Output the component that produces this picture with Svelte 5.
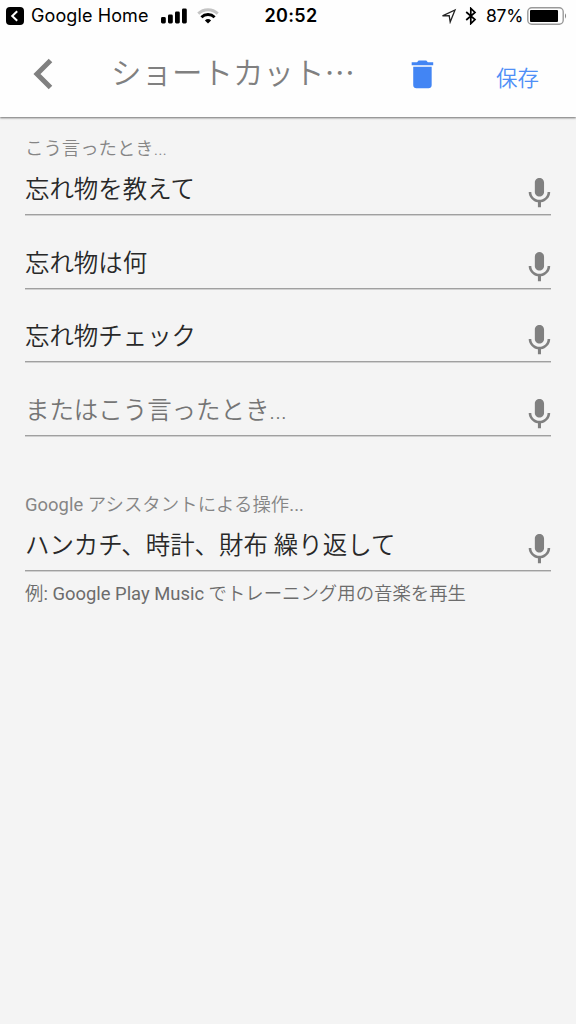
<script>
	let back = "Google Home";
	let time = "20:52";
	let battery = 87;

	let phrases = ["忘れ物を教えて", "忘れ物は何", "忘れ物チェック", ""];
	let action = "ハンカチ、時計、財布 繰り返して";
</script>

{#snippet mic()}
	<svg class="mic" viewBox="0 0 24 24">
		<path
			d="M12 14c1.66 0 2.99-1.34 2.99-3L15 5c0-1.66-1.34-3-3-3S9 3.34 9 5v6c0 1.66 1.34 3 3 3zm5.3-3c0 3-2.54 5.1-5.3 5.1S6.7 14 6.7 11H5c0 3.41 2.72 6.23 6 6.72V21h2v-3.28c3.28-.48 6-3.3 6-6.72h-1.7z"
		/>
	</svg>
{/snippet}

<main>
	<header>
		<div class="status">
			<div class="left">
				<svg class="app" viewBox="0 0 18 18">
					<rect width="18" height="18" rx="4" />
					<path d="M11.2 4.2 6.2 9l5 4.8" fill="none" stroke="#fff" stroke-width="2" />
				</svg>
				<span class="back">{back}</span>
				<svg class="signal" viewBox="0 0 26 16">
					<rect x="0" y="9" width="4.8" height="6.5" rx="1.4" />
					<rect x="7" y="6.5" width="4.8" height="9" rx="1.4" />
					<rect x="14" y="3.5" width="4.8" height="12" rx="1.4" />
					<rect x="21" y="0.5" width="4.8" height="15" rx="1.4" />
				</svg>
				<svg class="wifi" viewBox="0 0 22 16" fill="none" stroke-width="2.9">
					<path d="M1.3 5.6a14 14 0 0 1 19.4 0" stroke="#c4c4c4" />
					<path d="M4.4 9.2a9.5 9.5 0 0 1 13.2 0" stroke="#000" />
					<path d="M7.9 12.5a4.6 4.6 0 0 1 6.2 0L11 15.6z" fill="#000" />
				</svg>
			</div>
			<span class="time">{time}</span>
			<div class="right">
				<svg class="location" viewBox="0 0 16 16">
					<path d="M1.5 7.8 14 2 9.2 14 8.2 7.6z" fill="none" stroke="#222" stroke-width="1.3" />
				</svg>
				<svg class="bluetooth" viewBox="0 0 12 18">
					<path d="M1.2 5 10 12.5 5.8 16.6V1.4L10 5.5 1.2 13" fill="none" stroke="#000" stroke-width="1.7" />
				</svg>
				<span class="percent">{battery}%</span>
				<svg class="battery" viewBox="0 0 41 18">
					<rect x="0.8" y="0.8" width="35.4" height="16.4" rx="4" fill="none" stroke="#999" stroke-width="1.4" />
					<rect x="3" y="3" width={(32.2 * battery) / 100} height="12" rx="1" />
					<path d="M38 6.3q2.2 2.7 0 5.4z" fill="#888" />
				</svg>
			</div>
		</div>

		<nav>
			<svg class="chevron" viewBox="0 0 20 32">
				<path d="M17.5 2.5 4 16l13.5 13.5" fill="none" stroke="#808080" stroke-width="5" />
			</svg>
			<h1>ショートカット⋯</h1>
			<svg class="trash" viewBox="0 0 24 24">
				<path d="M6 19c0 1.1.9 2 2 2h8c1.1 0 2-.9 2-2V7H6v12zM19 4h-3.5l-1-1h-5l-1 1H5v2h14V4z" />
			</svg>
			<button>保存</button>
		</nav>
	</header>

	<section>
		<p class="label">こう言ったとき...</p>
		{#each phrases as phrase}
			<div class="field">
				{#if phrase}
					<span>{phrase}</span>
				{:else}
					<span class="empty">またはこう言ったとき...</span>
				{/if}
				{@render mic()}
			</div>
		{/each}
	</section>

	<section class="actions">
		<p class="label"><b>Google</b> アシスタントによる操作<b>...</b></p>
		<div class="field">
			<span>{action}</span>
			{@render mic()}
		</div>
		<p class="hint">例<b>: Google Play Music</b> でトレーニング用の音楽を再生</p>
	</section>
</main>

<style>
	:global(body) {
		background: #f4f4f4;
	}

	main {
		min-height: 1024px;
		background: #f4f4f4;
		font-family: Roboto, "Noto Sans CJK JP", sans-serif;
	}

	header {
		height: 117px;
		background: #fefefe;
		box-shadow: 0 1px 2px rgba(0, 0, 0, 0.55);
	}

	.status {
		display: grid;
		grid-template-columns: 1fr auto 1fr;
		align-items: center;
		height: 32px;
		padding: 0 8px 0 6px;
		color: #000;
		font-family: Inter, sans-serif;
		font-size: 18px;
		line-height: 32px;
	}

	.left,
	.right {
		display: flex;
		align-items: center;
	}

	.right {
		justify-content: flex-end;
	}

	.app {
		width: 18px;
		height: 18px;
		margin-right: 7px;
	}

	.back {
		width: 118px;
		letter-spacing: 0.1px;
		white-space: nowrap;
	}

	.signal {
		width: 26px;
		height: 16px;
		margin-left: 12px;
	}

	.wifi {
		width: 22px;
		height: 16px;
		margin-left: 10px;
	}

	.time {
		padding-left: 8px;
		font-weight: 600;
		letter-spacing: 0.3px;
	}

	.location {
		width: 16px;
		height: 16px;
		margin-right: 8px;
	}

	.bluetooth {
		width: 12px;
		height: 18px;
		margin-right: 9px;
	}

	.percent {
		width: 37px;
		font-size: 17.5px;
		letter-spacing: -0.3px;
		white-space: nowrap;
	}

	.battery {
		width: 41px;
		height: 18px;
		margin-left: 4px;
	}

	nav {
		display: flex;
		align-items: center;
		height: 84px;
		padding-left: 33px;
	}

	.chevron {
		width: 20px;
		height: 32px;
	}

	h1 {
		width: 246px;
		margin: 0 0 1px 58px;
		color: #808080;
		font-size: 30.5px;
		font-weight: 350;
		line-height: 40px;
		white-space: nowrap;
	}

	.trash {
		width: 36.9px;
		height: 36.9px;
		margin-left: 47px;
		fill: #4285f4;
	}

	button {
		margin: 9px 0 0 55px;
		padding: 0;
		border: 0;
		background: none;
		color: #4f8ff7;
		font: 350 21.5px/30px Roboto, "Noto Sans CJK JP", sans-serif;
	}

	section {
		padding: 20px 25px 0;
	}

	p {
		margin: 0;
		font-size: 18.4px;
		line-height: 24px;
		white-space: nowrap;
	}

	b {
		font-weight: 400;
	}

	.label {
		margin-bottom: 4px;
		color: #858585;
		font-weight: 350;
	}

	.field {
		display: flex;
		justify-content: space-between;
		box-sizing: border-box;
		height: 50px;
		margin-bottom: 23.7px;
		border-bottom: 1px solid #a0a0a0;
		box-shadow: 0 1px #d0d0d0;
		color: #282828;
		font-size: 24.45px;
		font-weight: 350;
		line-height: 50px;
		white-space: nowrap;
	}

	.empty {
		color: #757575;
	}

	.mic {
		width: 36.9px;
		height: 36.9px;
		margin: 10px -6.5px 0 0;
		fill: #808080;
	}

	.actions {
		padding-top: 33px;
	}

	.actions .label {
		letter-spacing: 0.04px;
	}

	.actions .field {
		margin-bottom: 11px;
	}

	.hint {
		color: #6c6c6c;
		font-weight: 350;
	}
</style>
